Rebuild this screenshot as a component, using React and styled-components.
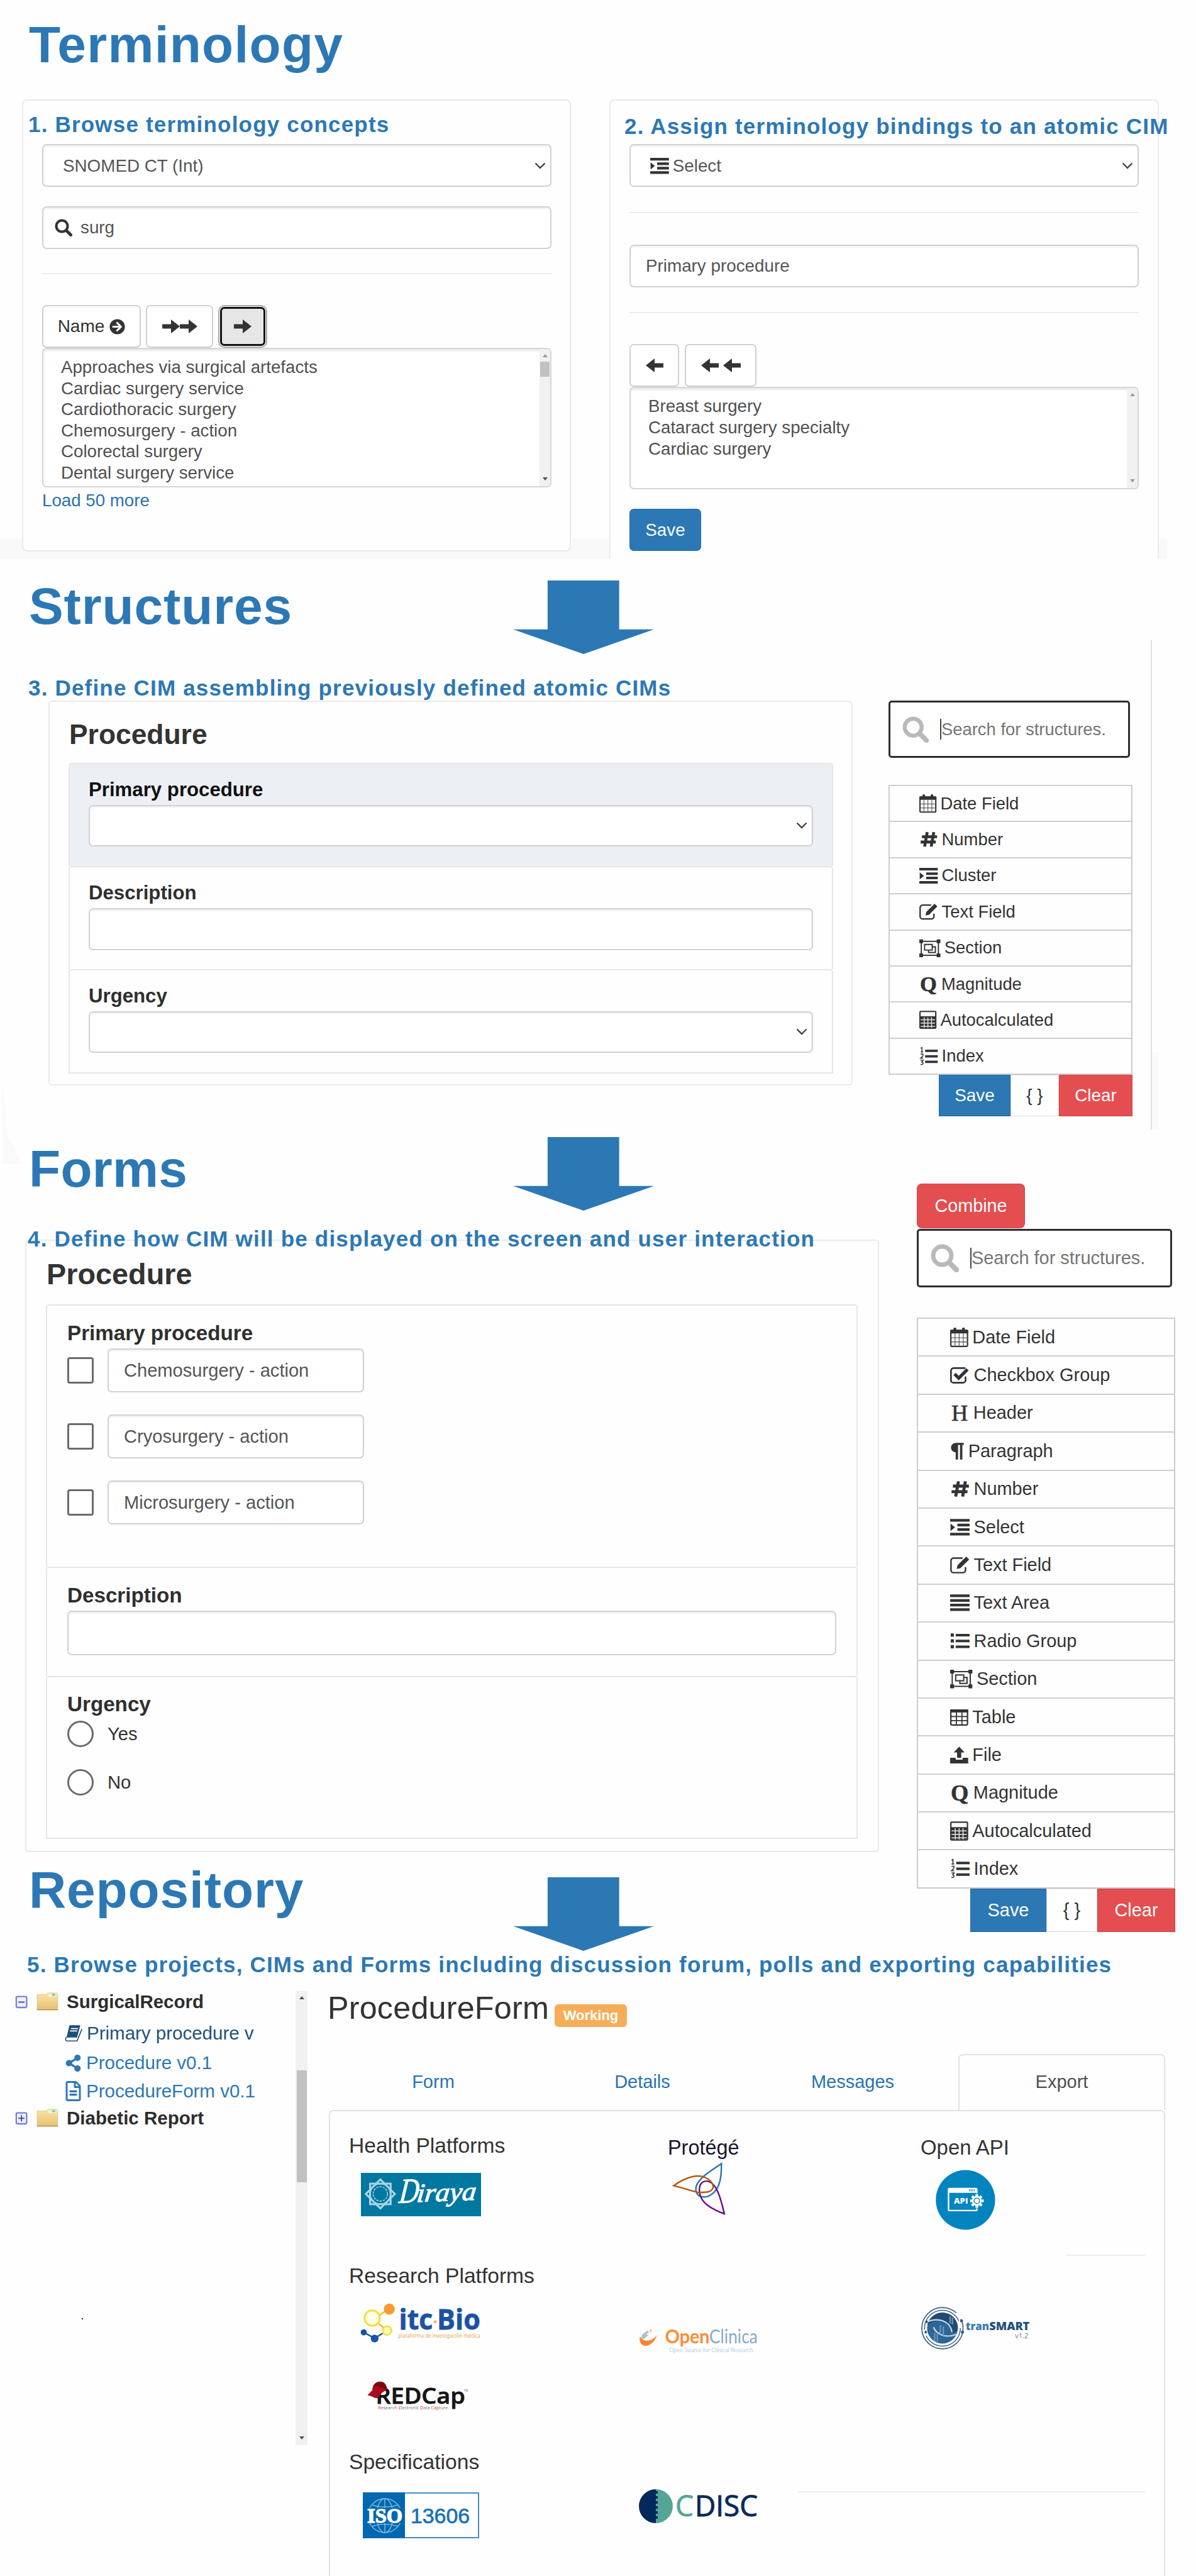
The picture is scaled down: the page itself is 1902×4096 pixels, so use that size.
import React from "react";
import styled, { createGlobalStyle, css } from "styled-components";
import { FaArrowCircleRight, FaShareAlt, FaRegFileAlt } from "react-icons/fa";

const BLUE = "#2c78b5";
const RED = "#e54e50";
const LINK = "#2a73b0";

const GlobalStyle = createGlobalStyle`
  * { box-sizing: border-box; }
  body { margin: 0; background: #fefefe; }
`;

const Page = styled.main`
  position: relative;
  width: 1902px;
  height: 4096px;
  overflow: hidden;
  display: flex;
  flex-direction: column;
  background: #fefefe;
  color: #333;
  font-family: "Liberation Sans", Arial, sans-serif;
  font-size: 28px;
`;

const Section = styled.section`
  position: relative;
  flex: none;
  height: ${(p) => p.$h}px;
`;

const TerminologySection = styled(Section)`
  background: linear-gradient(#f9f9f9, #f9f9f9) no-repeat 0 856px / 1856px 33px;
  padding-top: 30px;
  overflow: hidden;
`;

const Header = styled.header`
  display: flex;
  align-items: flex-start;
  padding-top: ${(p) => p.$pt || 0}px;
`;

const Title = styled.h1`
  flex: 0 0 816px;
  margin: ${(p) => p.$mt || 0}px 0 0;
  padding-left: 46px;
  font-size: 82px;
  line-height: 82px;
  letter-spacing: ${(p) => p.$ls ?? 0.9}px;
  color: ${BLUE};
  white-space: nowrap;
`;

const DownArrow = styled.div`
  width: 224px;
  height: 117px;
  margin-top: ${(p) => p.$mt || 0}px;
  background: ${BLUE};
  clip-path: polygon(24.5% 0, 75.3% 0, 75.3% 66.5%, 100% 66.5%, 50% 100%, 0 66.5%, 24.5% 66.5%);
`;

const Step = styled.h2`
  position: relative;
  z-index: 1;
  margin: ${(p) => p.$mt || 0}px 0 0 ${(p) => p.$ml || 0}px;
  font-size: 35px;
  line-height: 40px;
  letter-spacing: 1.19px;
  color: ${BLUE};
  white-space: nowrap;
`;

const Row = styled.div`
  display: flex;
  align-items: flex-start;
  margin-top: ${(p) => p.$mt || 0}px;
  padding-left: ${(p) => p.$pl || 0}px;
`;

const Panel = styled.div`
  flex: none;
  width: ${(p) => p.$w}px;
  height: ${(p) => p.$h}px;
  margin-left: ${(p) => p.$ml || 0}px;
  border: 2px solid #eaeaea;
  border-radius: ${(p) => p.$r ?? 8}px;
  background: ${(p) => (p.$clear ? "transparent" : "#fefefe")};
  padding-top: ${(p) => p.$pt || 0}px;
`;

const PanelBody = styled.div`
  display: flex;
  flex-direction: column;
  align-items: flex-start;
  width: 810px;
  margin: ${(p) => p.$mt || 0}px 0 0 30px;
`;

const Field = styled.div`
  display: flex;
  align-items: center;
  width: ${(p) => p.$w || "100%"};
  height: ${(p) => p.$h || 68}px;
  margin-top: ${(p) => p.$mt || 0}px;
  padding: ${(p) => p.$pt || 0}px 7px 0 ${(p) => p.$pl || 24}px;
  border: 2px solid #d2d2d2;
  border-radius: 7px;
  background: #fff;
  box-shadow: inset 0 2px 3px rgba(0, 0, 0, 0.07);
  color: #555;
  font-size: ${(p) => p.$fs || 27.8}px;
  white-space: nowrap;
`;

const FieldText = styled.span`
  margin-left: ${(p) => p.$ml}px;
`;

const Spacer = styled.span`
  flex: 1;
`;

const Rule = styled.div`
  flex: none;
  height: 2px;
  width: ${(p) => p.$w || "100%"};
  margin: ${(p) => p.$mt || 0}px 0 0 ${(p) => p.$ml || 0}px;
  background: #eee;
`;

const ButtonRow = styled.div`
  display: flex;
  gap: ${(p) => p.$gap || 0}px;
  margin-top: ${(p) => p.$mt || 0}px;
  justify-content: ${(p) => (p.$end ? "flex-end" : "flex-start")};
`;

const IconButton = styled.button`
  display: flex;
  align-items: center;
  justify-content: center;
  gap: ${(p) => p.$gap || 0}px;
  width: ${(p) => p.$w}px;
  height: 68px;
  padding: 0;
  border: 2px solid #d0d0d0;
  border-radius: 7px;
  background: #fff;
  color: #333;
  font: inherit;
  font-size: 28px;
  ${(p) =>
    p.$active &&
    css`
      background: #e6e6e6;
      border: 3px solid #111;
      box-shadow: 0 0 0 1px #fff, 0 0 0 3px #aaa;
      width: ${p.$w - 6}px;
      height: 62px;
      margin: 3px 0 0 3px;
    `}
`;

const ListBox = styled.div`
  display: flex;
  width: 100%;
  height: ${(p) => p.$h}px;
  border: 2px solid #d6d6d6;
  border-radius: 7px;
  background: #fff;
  box-shadow: inset 0 3px 3px rgba(0, 0, 0, 0.09);
  overflow: hidden;
`;

const Options = styled.ul`
  flex: 1;
  margin: 0;
  padding: 12px 0 0 28px;
  list-style: none;
  color: #505050;
  font-size: 27.7px;
  line-height: ${(p) => p.$lh}px;
`;

const Track = styled.div`
  display: flex;
  flex-direction: column;
  align-items: center;
  width: ${(p) => p.$w || 17}px;
  height: ${(p) => p.$h || "100%"};
  margin: ${(p) => p.$m || "0"};
  background: #f1f1f1;
`;

const Tip = styled.i`
  width: 0;
  height: 0;
  margin: ${(p) => (p.$up ? "8px 0 0" : "auto 0 9px")};
  border: 4px solid transparent;
  ${(p) => (p.$up ? `border-top: 0; border-bottom: 5px solid ${p.$c};` : `border-bottom: 0; border-top: 5px solid ${p.$c};`)}
`;

const Thumb = styled.i`
  width: ${(p) => p.$w}px;
  height: ${(p) => p.$h}px;
  margin-top: ${(p) => p.$mt}px;
  background: #c1c1c1;
`;

const MoreLink = styled.a`
  margin-top: 3px;
  color: ${LINK};
  font-size: 27.7px;
  line-height: 36px;
`;

const Button = styled.button`
  display: flex;
  align-items: center;
  justify-content: center;
  width: ${(p) => p.$w}px;
  height: ${(p) => p.$h}px;
  margin-top: ${(p) => p.$mt || 0}px;
  padding: 0;
  border: ${(p) => (p.$bg ? "1px solid rgba(0,0,60,.12)" : "1px solid #ddd")};
  border-radius: ${(p) => p.$r || 0}px;
  background: ${(p) => p.$bg || "#fff"};
  color: ${(p) => (p.$bg ? "#fff" : "#333")};
  font: inherit;
  font-size: ${(p) => p.$fs || 27.8}px;
`;

const FormName = styled.h3`
  margin: 0 0 0 ${(p) => p.$ml}px;
  font-size: ${(p) => p.$fs}px;
  line-height: 52px;
`;

const Group = styled.div`
  width: ${(p) => p.$w}px;
  margin: ${(p) => p.$mt}px 0 0 ${(p) => p.$ml}px;
`;

const GroupRow = styled.div`
  height: ${(p) => p.$h}px;
  padding: ${(p) => p.$pad};
  border: 2px solid #e6e6e6;
  border-bottom-width: ${(p) => (p.$last ? 2 : 0)}px;
  border-radius: 5px 5px 0 0;
  background: ${(p) => (p.$active ? "#ecf0f5" : "transparent")};
`;

const Label = styled.div`
  font-weight: bold;
  font-size: ${(p) => p.$fs}px;
  line-height: ${(p) => p.$lh}px;
  color: ${(p) => (p.$dark ? "#111" : "#2f2f2f")};
`;

const Choices = styled.div`
  display: flex;
  flex-direction: column;
  gap: ${(p) => p.$gap}px;
  margin-top: ${(p) => p.$mt}px;
`;

const Choice = styled.label`
  display: flex;
  align-items: center;
  gap: 22px;
  font-size: 29.2px;
  color: #333;
`;

const Box = styled.span`
  flex: none;
  width: 42px;
  height: 42px;
  border: 3px solid #6b6b6b;
  border-radius: ${(p) => (p.$round ? "50%" : "4px")};
  background: #fff;
`;

const Aside = styled.aside`
  flex: none;
  width: ${(p) => p.$w}px;
  margin: ${(p) => p.$mt || 0}px 0 0 ${(p) => p.$ml}px;
`;

const SearchBox = styled.div`
  display: flex;
  align-items: center;
  width: ${(p) => p.$w}px;
  height: ${(p) => p.$h}px;
  margin-top: ${(p) => p.$mt || 0}px;
  padding-left: 19px;
  border: 3px solid #2d2d2d;
  border-radius: 5px;
  background: #fff;
  color: #757575;
  font-size: ${(p) => p.$fs}px;
  white-space: nowrap;
`;

const Caret = styled.i`
  width: 2px;
  height: 33px;
  margin-left: 18px;
  background: #444;
`;

const Palette = styled.ul`
  margin: ${(p) => p.$mt}px 0 0;
  padding: 0;
  list-style: none;
  border: 2px solid #ccc;
  border-top: 0;
  font-size: ${(p) => p.$fs}px;
`;

const PaletteItem = styled.li`
  display: flex;
  align-items: center;
  gap: 0.23em;
  height: ${(p) => p.$h}px;
  padding-left: ${(p) => p.$pl}px;
  border-top: 2px solid #cfcfcf;
  color: #333;
`;

const Glyph = styled.svg`
  flex: none;
  width: ${(p) => p.$w * 0.0764}em;
  height: 1.07em;
  overflow: visible;
  fill: #333;
`;

const SerifGlyph = styled.span`
  flex: none;
  width: 0.83em;
  font-family: "Liberation Serif", "Times New Roman", serif;
  font-weight: ${(p) => (p.$bold ? "bold" : "normal")};
  font-size: 1.26em;
  line-height: 1;
  text-align: center;
  -webkit-text-stroke: 0.6px #333;
`;

const Rail = styled.div`
  position: absolute;
  left: 1830px;
  top: 129px;
  width: 13px;
  height: 778px;
  border-left: 2px solid #e0e0e0;
  background: linear-gradient(#fafafa, #fafafa) no-repeat 0 655px / 100% 123px;
`;

const CornerShade = styled.div`
  position: absolute;
  left: 4px;
  top: 1725px;
  width: 30px;
  height: 126px;
  background: #fafafa;
  clip-path: polygon(0 0, 25% 60%, 100% 100%, 0 100%);
`;

const Tree = styled.div`
  position: relative;
  width: 470px;
  height: 723px;
`;

const Node = styled.div`
  display: flex;
  align-items: center;
  height: 36px;
  margin-bottom: ${(p) => p.$mb || 0}px;
  padding-left: ${(p) => (p.$leaf ? 103 : 24)}px;
  font-size: 29.5px;
  font-weight: ${(p) => (p.$leaf ? "normal" : "bold")};
  color: ${(p) => p.$c || "#2d2d2d"};
  white-space: nowrap;
  & > svg { flex: none; }
`;

const NodeText = styled.span`
  margin-left: ${(p) => p.$ml}px;
`;

const FolderIcon = styled.svg`
  width: 35px;
  height: 30px;
  margin-left: 14px;
`;

const FileIcon = styled(FaRegFileAlt)`
  width: 27px;
  height: 32px;
`;

const Speck = styled.i`
  position: absolute;
  left: 130px;
  top: 521px;
  width: 2px;
  height: 2px;
  background: #222;
`;

const Repo = styled.div`
  flex: none;
  width: 1330px;
  margin-left: 34px;
`;

const RepoHead = styled.div`
  display: flex;
  align-items: flex-start;
`;

const RepoName = styled.h3`
  flex: 0 0 361px;
  margin: 0 0 0 -2px;
  font-size: 50.3px;
  font-weight: normal;
  line-height: 56px;
  letter-spacing: 0.2px;
`;

const Badge = styled.span`
  width: 115px;
  height: 36px;
  margin-top: 22px;
  border-radius: 6px;
  background: #f6ad57;
  color: #fff;
  font-size: 22px;
  font-weight: bold;
  line-height: 36px;
  text-align: center;
`;

const Tabs = styled.nav`
  display: grid;
  grid-template-columns: 332px 333px 336px 1fr;
  margin-top: 43px;
`;

const Tab = styled.a`
  height: 89px;
  line-height: 88px;
  font-size: 29px;
  text-align: center;
  color: ${(p) => (p.$active ? "#505050" : LINK)};
  ${(p) =>
    p.$active &&
    css`
      line-height: 84px;
      border: 2px solid #e2e2e2;
      border-bottom: 0;
      border-radius: 7px 7px 0 0;
    `}
`;

const Exports = styled.div`
  height: 744px;
  border: 2px solid #e0e0e0;
  border-bottom: 0;
  border-radius: 7px 7px 0 0;
`;

const ExportRow = styled.div`
  display: flex;
  height: ${(p) => p.$h}px;
  padding-left: 30px;
`;

const Cell = styled.div`
  flex: 0 0 ${(p) => p.$w}px;
`;

const PlatformHead = styled.h4`
  margin: ${(p) => p.$mt}px 0 0 ${(p) => p.$ml || 0}px;
  font-size: ${(p) => p.$fs || 33.6}px;
  font-weight: normal;
  line-height: 40px;
  color: ${(p) => p.$c || "#333"};
`;

const Logo = styled.svg`
  display: block;
  width: ${(p) => p.$w}px;
  height: ${(p) => p.$h}px;
  margin: ${(p) => p.$mt}px 0 0 ${(p) => p.$ml}px;
  overflow: visible;
  font-family: ${(p) => p.$ff || '"Open Sans"'}, sans-serif;
`;

const GLYPHS = {
  calendar: [13, <>
    <rect x=".5" y="2" width="12" height="11.500" rx=".6" fill="none" stroke="#333" />
    <rect x="0" y="1.600" width="13" height="2.600" rx=".6" />
    <rect x="2.400" y="0" width="2" height="3.400" rx=".8" /><rect x="8.600" y="0" width="2" height="3.400" rx=".8" />
    <path d="M3.500 4v9.500M6.500 4v9.500M9.500 4v9.500M.5 7.300h12M.5 10.300h12" stroke="#666" strokeWidth=".6" />
  </>],
  hash: [14, <path d="M6 1.500 4 12.500M11 1.500 9 12.500M2 5h11.500M1 9h11.500" stroke="#333" strokeWidth="2.200" fill="none" />],
  indent: [14, <path d="M0 1h14v1.900H0zM5.200 4.400H14v1.900H5.200zM5.200 7.700H14v1.900H5.200zM0 11h14v1.900H0zM.3 4.300 3.500 7 .3 9.700z" />],
  edit: [14, <>
    <path d="M9 2H2.500A1.900 1.900 0 0 0 .6 3.900v6.700a1.900 1.900 0 0 0 1.900 1.900h6.700a1.900 1.900 0 0 0 1.900-1.900V8.500" fill="none" stroke="#333" strokeWidth="1.100" />
    <path d="m11.600.9 2.100 2.100-6.300 6.300-2.700.6.600-2.700z" />
  </>],
  check: [14, <>
    <path d="M11 2H2.500A1.900 1.900 0 0 0 .6 3.900v6.700a1.900 1.900 0 0 0 1.900 1.900h6.700a1.900 1.900 0 0 0 1.900-1.900V8" fill="none" stroke="#333" strokeWidth="1.200" />
    <path d="m3.200 6.200 3 3 6.300-6.300" fill="none" stroke="#333" strokeWidth="2.400" />
  </>],
  group: [16, <>
    <rect x="1.500" y="1.800" width="13" height="10.600" fill="none" stroke="#333" strokeWidth=".9" />
    <path d="M0 .4h2.800v2.800H0zM13.200.4H16v2.800h-2.800zM0 11h2.800v2.800H0zM13.200 11H16v2.800h-2.800z" />
    <path d="M4 4.200h5.800v4.200H4zM9.800 6h2.400v4.300H7V8.400" fill="none" stroke="#333" strokeWidth=".9" />
  </>],
  calc: [13, <>
    <rect x=".5" y=".6" width="12" height="12.800" rx=".6" fill="none" stroke="#333" />
    <path d="M.5 4.200h12V13H.5z" />
    <path d="M1 6.900h11M1 9.400h11M1 11.900h11M3.700 5v8M6.500 5v8M9.300 5v8" stroke="#e4e4e4" strokeWidth=".7" />
  </>],
  index: [14, <>
    <path d="M4.400 1.900H14v1.800H4.400zM4.400 6.100H14v1.800H4.400zM4.400 10.300H14v1.800H4.400z" />
    <path d="M1 .9 2 .3v3.200M1 3.600h2M1 5.200h1.700v1.400L1 8.400h2M1 10h1.900l-1 1.400c1.600.2 1.200 2.200-1 1.800" fill="none" stroke="#444" strokeWidth=".8" />
  </>],
  para: [10, <path d="M9.800 1v1.500h-1V13H7.100V2.500H5.700V13H4V7.800A3.400 3.400 0 0 1 4 1z" />],
  bars: [14, <path d="M0 1h14v1.900H0zM0 4.400h14v1.900H0zM0 7.700h14v1.900H0zM0 11h14v1.900H0z" />],
  list: [14, <path d="M4 1.800h10v1.800H4zM4 6h10v1.800H4zM4 10.200h10V12H4zM.4 1.500h2.300v2.300H.4zM.4 5.700h2.300V8H.4zM.4 9.900h2.300v2.300H.4z" />],
  table: [13, <>
    <rect x=".5" y="1.800" width="12" height="10.800" rx=".8" fill="none" stroke="#333" />
    <path d="M0 1.400h13v2.200H0z" />
    <path d="M4.500 3v9.500M8.500 3v9.500M.5 6.500h12M.5 9.500h12" stroke="#333" strokeWidth=".8" />
  </>],
  upload: [13, <path d="M6.500 1 10.400 5.200H8v3.900H5V5.200H2.600zM0 9.100h4v1.300h5V9.100h4v4H0z" />],
};

function ItemIcon({ name }) {
  if (name === "Q") return <SerifGlyph $bold>Q</SerifGlyph>;
  if (name === "H") return <SerifGlyph>H</SerifGlyph>;
  const [w, body] = GLYPHS[name];
  return <Glyph $w={w} viewBox={`0 0 ${w} 14`}>{body}</Glyph>;
}

const Chevron = () => (
  <svg width="18" height="12" viewBox="0 0 18 12"><path d="M1.500 1.500 9 9l7.500-7.500" fill="none" stroke="#444" strokeWidth="2.400" /></svg>
);
const ArrowRight = () => (
  <svg width="28" height="22" viewBox="0 0 28 22"><path d="M0 7.500h14V0l14 11-14 11v-7.500H0z" fill="#333" /></svg>
);
const ArrowLeft = () => (
  <svg width="28" height="22" viewBox="0 0 28 22"><path d="M28 7.500H14V0L0 11l14 11v-7.500h14z" fill="#333" /></svg>
);
const Magnifier = ({ size, color, sw }) => (
  <svg width={size} height={size} viewBox="0 0 28 28">
    <circle cx="11.500" cy="11.500" r="9" fill="none" stroke={color} strokeWidth={sw} />
    <path d="m18.500 18.500 7 7" stroke={color} strokeWidth={sw + 1} strokeLinecap="round" />
  </svg>
);

function Scroll({ w, h, m, up = "#505050", down = "#505050", thumb }) {
  return (
    <Track $w={w} $h={h} $m={m}>
      <Tip $up $c={up} />
      {thumb && <Thumb $w={thumb.w} $h={thumb.h} $mt={thumb.mt} />}
      <Tip $c={down} />
    </Track>
  );
}

const Toggle = ({ plus }) => (
  <svg width="20" height="21" viewBox="0 0 85 88">
    <rect x="8" y="6" width="70" height="74" rx="8" fill="#f0f1fa" stroke="#7584dd" strokeWidth="10" />
    <path d={plus ? "M22 43h42M43 22v42" : "M22 44h42"} stroke="#4a56a8" strokeWidth="9" />
  </svg>
);

const Folder = () => (
  <FolderIcon viewBox="0 0 145 125">
    <defs>
      <linearGradient id="folder" x1="0" y1="0" x2="0" y2="1">
        <stop offset="0" stopColor="#fbe6a4" /><stop offset="1" stopColor="#e6bf72" />
      </linearGradient>
    </defs>
    <path d="M4 14h64l6-10h60l6 10v102H4z" fill="url(#folder)" stroke="#dcb768" strokeWidth="3" />
    <path d="M72 8h60v18l-50 4z" fill="#f6f3d8" />
    <path d="M102 10h22v12h-22z" fill="#58d0c8" />
    <path d="M2 115h141" stroke="#b08a45" strokeWidth="6" />
  </FolderIcon>
);

const Book = () => (
  <svg width="28" height="28" viewBox="0 0 120 115">
    <path d="M32 3h74L84 86H12z" fill="#1d4f7c" />
    <path d="M12 84C2 92 4 110 16 110h68l32-80" fill="none" stroke="#1d4f7c" strokeWidth="7" />
    <path d="M42 26h48M36 42h48" stroke="#fff" strokeWidth="7" />
  </svg>
);

const structureItems = [
  ["calendar", "Date Field"], ["hash", "Number"], ["indent", "Cluster"], ["edit", "Text Field"],
  ["group", "Section"], ["Q", "Magnitude"], ["calc", "Autocalculated"], ["index", "Index"],
];
const formItems = [
  ["calendar", "Date Field"], ["check", "Checkbox Group"], ["H", "Header"], ["para", "Paragraph"],
  ["hash", "Number"], ["indent", "Select"], ["edit", "Text Field"], ["bars", "Text Area"],
  ["list", "Radio Group"], ["group", "Section"], ["table", "Table"], ["upload", "File"],
  ["Q", "Magnitude"], ["calc", "Autocalculated"], ["index", "Index"],
];

function ItemPalette({ items, mt, fs, h, pl }) {
  return (
    <Palette $mt={mt} $fs={fs}>
      {items.map(([icon, text]) => (
        <PaletteItem key={text} $h={h} $pl={pl}><ItemIcon name={icon} /><span>{text}</span></PaletteItem>
      ))}
    </Palette>
  );
}

function Terminology() {
  return (
    <TerminologySection $h={889}>
      <Title $ls={1.3}>Terminology</Title>
      <Row $mt={46} $pl={35}>
        <Panel $w={873} $h={719} $pt={18}>
          <Step $ml={8}>1. Browse terminology concepts</Step>
          <PanelBody $mt={11}>
            <Field $pl={31} $pt={2}>SNOMED CT (Int)<Spacer /><Chevron /></Field>
            <Field $mt={31} $pl={18}><Magnifier size={28} color="#333" sw={4} /><FieldText $ml={13}>surg</FieldText></Field>
            <Rule $mt={38} />
            <ButtonRow $mt={49} $gap={8}>
              <IconButton $w={157} $gap={8}>Name<FaArrowCircleRight size={25} /></IconButton>
              <IconButton $w={107}><ArrowRight /><ArrowRight /></IconButton>
              <IconButton $w={78} $active><ArrowRight /></IconButton>
            </ButtonRow>
            <ListBox $h={222}>
              <Options $lh={33.6}>
                <li>Approaches via surgical artefacts</li>
                <li>Cardiac surgery service</li>
                <li>Cardiothoracic surgery</li>
                <li>Chemosurgery - action</li>
                <li>Colorectal surgery</li>
                <li>Dental surgery service</li>
              </Options>
              <Scroll up="#999" thumb={{ w: 15, h: 24, mt: 7 }} />
            </ListBox>
            <MoreLink>Load 50 more</MoreLink>
          </PanelBody>
        </Panel>
        <Panel $ml={61} $w={874} $h={760} $pt={21}>
          <Step $ml={22}>2. Assign terminology bindings to an atomic CIM</Step>
          <PanelBody $mt={8}>
            <Field $pl={31} $pt={2}><Glyph $w={14} viewBox="0 0 14 14">{GLYPHS.indent[1]}</Glyph><FieldText $ml={6}>Select</FieldText><Spacer /><Chevron /></Field>
            <Rule $mt={40} />
            <Field $mt={50}>Primary procedure</Field>
            <Rule $mt={39} />
            <ButtonRow $mt={49} $gap={9}>
              <IconButton $w={79}><ArrowLeft /></IconButton>
              <IconButton $w={114} $gap={7}><ArrowLeft /><ArrowLeft /></IconButton>
            </ButtonRow>
            <ListBox $h={163}>
              <Options $lh={34}>
                <li>Breast surgery</li>
                <li>Cataract surgery specialty</li>
                <li>Cardiac surgery</li>
              </Options>
              <Scroll up="#999" down="#999" />
            </ListBox>
            <Button $mt={31} $w={114} $h={67} $bg={BLUE} $r={7}>Save</Button>
          </PanelBody>
        </Panel>
      </Row>
    </TerminologySection>
  );
}

function Structures() {
  return (
    <Section $h={911}>
      <Rail />
      <Header $pt={34}><Title>Structures</Title><DownArrow /></Header>
      <Step $mt={34} $ml={45}>3. Define CIM assembling previously defined atomic CIMs</Step>
      <Row $pl={77}>
        <Panel $w={1279} $h={612} $pt={26} $r={6}>
          <FormName $ml={31} $fs={44.4}>Procedure</FormName>
          <Group $w={1216} $mt={19} $ml={30}>
            <GroupRow $h={164} $pad="23px 30px 0" $active>
              <Label $fs={31.2} $lh={36} $dark>Primary procedure</Label>
              <Field $mt={6} $h={66}><Spacer /><Chevron /></Field>
            </GroupRow>
            <GroupRow $h={164} $pad="23px 30px 0">
              <Label $fs={31.2} $lh={36}>Description</Label>
              <Field $mt={6} $h={67} />
            </GroupRow>
            <GroupRow $h={166} $pad="23px 30px 0" $last>
              <Label $fs={31.2} $lh={36}>Urgency</Label>
              <Field $mt={6} $h={66}><Spacer /><Chevron /></Field>
            </GroupRow>
          </Group>
        </Panel>
        <Aside $w={388} $ml={57}>
          <SearchBox $w={384} $h={91} $fs={27.4}><Magnifier size={42} color="#b9b9b9" sw={4.3} /><Caret />Search for structures.</SearchBox>
          <ItemPalette items={structureItems} mt={43} fs={27.4} h={57.4} pl={47} />
          <ButtonRow $end>
            <Button $w={114} $h={66} $bg={BLUE}>Save</Button>
            <Button $w={77} $h={66}>{"{ }"}</Button>
            <Button $w={117} $h={66} $bg={RED}>Clear</Button>
          </ButtonRow>
        </Aside>
      </Row>
    </Section>
  );
}

function Forms() {
  return (
    <Section $h={1164}>
      <Header $pt={8}><Title $mt={10} $ls={0.3}>Forms</Title><DownArrow /></Header>
      <Step $mt={25} $ml={44}>4. Define how CIM will be displayed on the screen and user interaction</Step>
      <Row $mt={-19} $pl={40}>
        <Panel $w={1358} $h={974} $pt={27} $r={6} $clear>
          <FormName $ml={32} $fs={46.8}>Procedure</FormName>
          <Group $w={1291} $mt={22} $ml={31}>
            <GroupRow $h={417} $pad="25px 32px 0">
              <Label $fs={33.2} $lh={38}>Primary procedure</Label>
              <Choices $mt={5} $gap={35}>
                {["Chemosurgery - action", "Cryosurgery - action", "Microsurgery - action"].map((t) => (
                  <Choice key={t}><Box /><Field $w="408px" $h={70} $fs={29.1}>{t}</Field></Choice>
                ))}
              </Choices>
            </GroupRow>
            <GroupRow $h={174} $pad="25px 32px 0">
              <Label $fs={33.2} $lh={38}>Description</Label>
              <Field $mt={5} $h={71} />
            </GroupRow>
            <GroupRow $h={259} $pad="24px 32px 0" $last>
              <Label $fs={33.2} $lh={38}>Urgency</Label>
              <Choices $mt={7} $gap={35}>
                <Choice><Box $round />Yes</Choice>
                <Choice><Box $round />No</Choice>
              </Choices>
            </GroupRow>
          </Group>
        </Panel>
        <Aside $w={411} $ml={60} $mt={-89}>
          <Button $w={172} $h={71} $bg={RED} $r={8} $fs={28.8}>Combine</Button>
          <SearchBox $mt={1} $w={406} $h={93} $fs={28.9}><Magnifier size={45} color="#b9b9b9" sw={4.3} /><Caret />Search for structures.</SearchBox>
          <ItemPalette items={formItems} mt={48} fs={28.9} h={60.4} pl={51} />
          <ButtonRow $end>
            <Button $w={121} $h={69} $bg={BLUE} $fs={28.9}>Save</Button>
            <Button $w={81} $h={69} $fs={28.9}>{"{ }"}</Button>
            <Button $w={124} $h={69} $bg={RED} $fs={28.9}>Clear</Button>
          </ButtonRow>
        </Aside>
      </Row>
    </Section>
  );
}

const Diraya = () => (
  <Logo $w={191} $h={69} $mt={23} $ml={19} viewBox="59 36 736 266" preserveAspectRatio="none">
    <rect x="59" y="36" width="736" height="266" fill="#0078a0" />
    <g fill="none" stroke="#a9d3e2">
      <rect x="115" y="102" width="126" height="126" strokeWidth="12" />
      <rect x="115" y="102" width="126" height="126" strokeWidth="12" transform="rotate(45 178 165)" />
      <circle cx="178" cy="165" r="62" strokeWidth="7" />
      <circle cx="178" cy="165" r="44" strokeWidth="6" strokeDasharray="14 6" />
    </g>
    <g transform="translate(0 222) rotate(-2) skewX(-8)" fill="#fff" stroke="#fff" strokeWidth="4" fontStyle="italic" fontFamily="Liberation Serif">
      <text x="290" y="8" fontSize="215" textLength="120" lengthAdjust="spacingAndGlyphs">D</text>
      <text x="398" y="6" fontSize="160" textLength="364" lengthAdjust="spacingAndGlyphs">iraya</text>
    </g>
  </Logo>
);

const Protege = () => (
  <Logo $w={87} $h={87} $mt={1} $ml={58} viewBox="250 170 360 360">
    <g fill="none" strokeWidth="10">
      <path d="M578 188C500 240 400 300 410 365C418 400 445 415 490 403C560 375 580 300 578 188z" stroke="#2678ab" />
      <path d="M597 518C575 420 545 300 475 303C440 308 430 335 434 375C442 450 520 490 597 518z" stroke="#6a0c8c" />
      <path d="M264 333C340 280 400 262 450 272C500 285 530 320 522 350C510 375 480 380 420 376C370 365 320 345 264 333z" stroke="#b3590c" />
    </g>
  </Logo>
);

const gearTeeth = [0, 45, 90, 135];
const OpenApi = () => (
  <Logo $w={95} $h={96} $mt={15} $ml={25} viewBox="215 168 395 398">
    <ellipse cx="412" cy="367" rx="196" ry="197" fill="#0284bf" />
    <rect x="300" y="292" width="187" height="145" rx="6" fill="none" stroke="#fff" strokeWidth="10" />
    <path d="M300 290h188v30H300z" fill="#fff" />
    <path d="M435 296h11v15h-11zM450 296h11v15h-11zM466 296h8v15h-8z" fill="#5fb1d8" />
    <circle cx="487" cy="373" r="50" fill="#0284bf" />
    <g stroke="#fff" strokeWidth="18">
      {gearTeeth.map((a) => <path key={a} d="M443 373h90" transform={`rotate(${a} 487 373)`} />)}
    </g>
    <circle cx="487" cy="373" r="32" fill="#fff" />
    <circle cx="487" cy="373" r="18" fill="none" stroke="#0284bf" strokeWidth="6" />
    <text x="336" y="392" fontSize="51" fontWeight="800" fill="#fff" textLength="93" lengthAdjust="spacingAndGlyphs">API</text>
  </Logo>
);

const ItcBio = () => (
  <Logo $w={194} $h={66} $mt={22} $ml={17} viewBox="50 830 750 255">
    <path d="M160 915 230 870M160 955 218 1003" stroke="#f5b52a" strokeWidth="9" />
    <path d="M75 1014 142 1050 205 1012" stroke="#1c53a3" strokeWidth="9" fill="none" />
    <circle cx="127" cy="926" r="47" fill="#fefde9" stroke="#fbdc35" strokeWidth="12" />
    <circle cx="218" cy="1003" r="27" fill="#fbf9b8" stroke="#f8dd38" strokeWidth="10" />
    <circle cx="232" cy="871" r="34" fill="#f79a30" />
    <circle cx="75" cy="1014" r="19" fill="#1c53a3" /><circle cx="142" cy="1052" r="24" fill="#1c53a3" />
    <text y="998" fontSize="172" fontWeight="bold" fill="#1b53a4" stroke="#1b53a4" strokeWidth="3">
      <tspan x="292" textLength="208" lengthAdjust="spacingAndGlyphs">itc</tspan>
      <tspan x="526" textLength="266" lengthAdjust="spacingAndGlyphs">Bio</tspan>
    </text>
    <circle cx="515" cy="949" r="8" fill="#f79a30" />
    <text x="288" y="1048" fontSize="37" fill="#f0a04c" textLength="504" lengthAdjust="spacingAndGlyphs">plataforma de investigación médica</text>
  </Logo>
);

const RedCap = () => (
  <Logo $w={163} $h={49} $mt={58} $ml={28} viewBox="95 1310 630 190">
    <text x="150" y="1455" fontSize="136" fontWeight="600" fill="#151515" stroke="#151515" strokeWidth="3" textLength="552" lengthAdjust="spacingAndGlyphs">REDCap</text>
    <path d="M102 1398 130 1370C128 1330 160 1314 185 1318C210 1322 218 1345 220 1370C195 1375 180 1395 160 1420C140 1420 125 1405 102 1402z" fill="#a90c1e" />
    <path d="M135 1345C150 1312 205 1305 218 1352L220 1370C190 1350 160 1345 135 1345z" fill="#7c0712" />
    <text x="165" y="1488" fontSize="27" fill="#777" textLength="430" lengthAdjust="spacingAndGlyphs">
      <tspan fill="#d33">R</tspan>esearch <tspan fill="#d33">E</tspan>lectronic <tspan fill="#d33">D</tspan>ata <tspan fill="#d33">Cap</tspan>ture
    </text>
    <text x="694" y="1380" fontSize="18" fill="#666">TM</text>
  </Logo>
);

const OpenClinica = () => (
  <Logo $w={193} $h={42} $mt={115} $ml={4} $ff="Lato" viewBox="25 1275 800 175">
    <path d="M38 1330C30 1370 50 1392 80 1392C115 1388 145 1350 150 1320C125 1360 70 1375 38 1330z" fill="#fb8430" />
    <path d="M48 1345C45 1310 75 1295 105 1300L80 1315 95 1322 65 1345z" fill="#a9c0d2" />
    <path d="M80 1300 90 1290M108 1300 112 1283" stroke="#fba469" strokeWidth="8" />
    <text x="205" y="1377" fontSize="126" fontWeight="bold" fill="#ff8a38" textLength="295" lengthAdjust="spacingAndGlyphs">Open</text>
    <text x="498" y="1377" fontSize="126" fill="#86abc8" textLength="320" lengthAdjust="spacingAndGlyphs">Clinica</text>
    <text x="232" y="1434" fontSize="38" fill="#b9d0e0" textLength="556" lengthAdjust="spacingAndGlyphs">Open Source for Clinical Research</text>
  </Logo>
);

const TranSmart = () => (
  <Logo $w={175} $h={70} $mt={80} $ml={1} viewBox="115 1065 725 290">
    <g fill="none" stroke="#3c6388">
      <circle cx="259" cy="1210" r="136" strokeWidth="7" strokeDasharray="740 50 64" />
      <circle cx="259" cy="1210" r="118" strokeWidth="6" strokeDasharray="320 40 330 50" />
    </g>
    <circle cx="259" cy="1210" r="101" fill="#2d6697" />
    <path d="M160 1190A101 101 0 0 1 359 1225C340 1240 330 1240 322 1235C310 1170 230 1130 160 1190z" fill="#234a70" />
    <path d="M150 1172C230 1135 310 1160 322 1236M200 1204C225 1260 290 1275 350 1250" fill="none" stroke="#c8d8e5" strokeWidth="9" />
    <path d="M208 1240v55M225 1250v50M310 1130v50M325 1140v45M245 1190v60M265 1200v60" stroke="#6d9bc0" strokeWidth="9" />
    <path d="M376 1154h18v16h-18zM382 1228h18v16h-18zM148 1160h14v16h-14zM142 1228h14v16h-14z" fill="#2c5378" />
    <text y="1222" fontSize="74" fontWeight="800">
      <tspan x="412" fill="#3b7db4" textLength="155" lengthAdjust="spacingAndGlyphs">tran</tspan>
      <tspan x="568" fill="#23507b" textLength="265" lengthAdjust="spacingAndGlyphs">SMART</tspan>
    </text>
    <text x="738" y="1276" fontSize="48" fill="#777" textLength="86" lengthAdjust="spacingAndGlyphs">v1.2</text>
  </Logo>
);

const Iso = () => (
  <Logo $w={185} $h={73} $mt={28} $ml={22} viewBox="0 0 185 73">
    <rect x="1" y="1" width="183" height="71" fill="#fff" stroke="#3d8fc4" strokeWidth="2" />
    <rect x="0" y="0" width="67" height="73" fill="#0068b1" />
    <g fill="none" stroke="#7fb6dd" strokeWidth="1.500">
      <circle cx="35" cy="37" r="27" /><ellipse cx="35" cy="37" rx="13" ry="27" />
      <path d="M35 10v54M14 20q21 7 42 0M14 54q21-7 42 0" />
    </g>
    <rect x="6" y="25" width="58" height="24" fill="#0068b1" />
    <text x="7" y="48" fontSize="32" fontWeight="bold" fontFamily="Liberation Serif" fill="#fff" stroke="#fff" strokeWidth="1.300" textLength="56" lengthAdjust="spacingAndGlyphs">ISO</text>
    <text x="76" y="49" fontSize="33" fontFamily="Liberation Sans" fill="#1572b5" stroke="#1572b5" strokeWidth=".7" textLength="94" lengthAdjust="spacingAndGlyphs">13606</text>
  </Logo>
);

const Cdisc = () => (
  <Logo $w={190} $h={54} $mt={75} $ml={6} viewBox="0 0 190 54">
    <path d="M27 0A27 27 0 0 0 27 54z" fill="#04285b" />
    <path d="M27 0A27 27 0 0 1 27 54z" fill="#55a595" />
    <path d="M28 3v48" stroke="#04285b" strokeWidth="4" strokeDasharray="4 4" />
    <text y="43" fontSize="46">
      <tspan x="58" fill="#55a595" stroke="#55a595" strokeWidth=".8" textLength="29" lengthAdjust="spacingAndGlyphs">C</tspan>
      <tspan x="89" fill="#0a2a5c" stroke="#0a2a5c" strokeWidth="1" textLength="100" lengthAdjust="spacingAndGlyphs">DISC</tspan>
    </text>
  </Logo>
);

function Repository() {
  return (
    <Section $h={1132}>
      <Header><Title>Repository</Title><DownArrow $mt={21} /></Header>
      <Step $mt={2} $ml={43}>5. Browse projects, CIMs and Forms including discussion forum, polls and exporting capabilities</Step>
      <Row $mt={21}>
        <Tree>
          <Node $mb={14}><Toggle /><Folder /><NodeText $ml={13}>SurgicalRecord</NodeText></Node>
          <Node $leaf $mb={11} $c="#23527c"><Book /><NodeText $ml={7}>Primary procedure v</NodeText></Node>
          <Node $leaf $mb={9} $c={BLUE}><FaShareAlt size={27} /><NodeText $ml={7}>Procedure v0.1</NodeText></Node>
          <Node $leaf $mb={7} $c={BLUE}><FileIcon /><NodeText $ml={7}>ProcedureForm v0.1</NodeText></Node>
          <Node><Toggle plus /><Folder /><NodeText $ml={13}>Diabetic Report</NodeText></Node>
          <Speck />
        </Tree>
        <Scroll w={19} h="722px" m="1px 0 0" thumb={{ w: 16, h: 178, mt: 113 }} />
        <Repo>
          <RepoHead><RepoName>ProcedureForm</RepoName><Badge>Working</Badge></RepoHead>
          <Tabs>
            <Tab>Form</Tab><Tab>Details</Tab><Tab>Messages</Tab><Tab $active>Export</Tab>
          </Tabs>
          <Exports>
            <ExportRow $h={228}>
              <Cell $w={455}><PlatformHead $mt={35}>Health Platforms</PlatformHead><Diraya /></Cell>
              <Cell $w={453}><PlatformHead $mt={38} $ml={52} $fs={32.4} $c="#17172c">Protégé</PlatformHead><Protege /></Cell>
              <Cell $w={350}><PlatformHead $mt={38} $ml={1} $fs={32.9}>Open API</PlatformHead><OpenApi /></Cell>
            </ExportRow>
            <Rule $w="126px" $ml={1170} />
            <ExportRow $h={296}>
              <Cell $w={455}><PlatformHead $mt={12}>Research Platforms</PlatformHead><ItcBio /><RedCap /></Cell>
              <Cell $w={453}><OpenClinica /></Cell>
              <Cell $w={350}><TranSmart /></Cell>
            </ExportRow>
            <ExportRow $h={200}>
              <Cell $w={455}><PlatformHead $mt={12}>Specifications</PlatformHead><Iso /></Cell>
              <Cell $w={260}><Cdisc /></Cell>
              <Rule $w="551px" $mt={78} />
            </ExportRow>
          </Exports>
        </Repo>
      </Row>
    </Section>
  );
}

export default function App() {
  return (
    <>
      <GlobalStyle />
      <Page>
        <CornerShade />
        <Terminology />
        <Structures />
        <Forms />
        <Repository />
      </Page>
    </>
  );
}
